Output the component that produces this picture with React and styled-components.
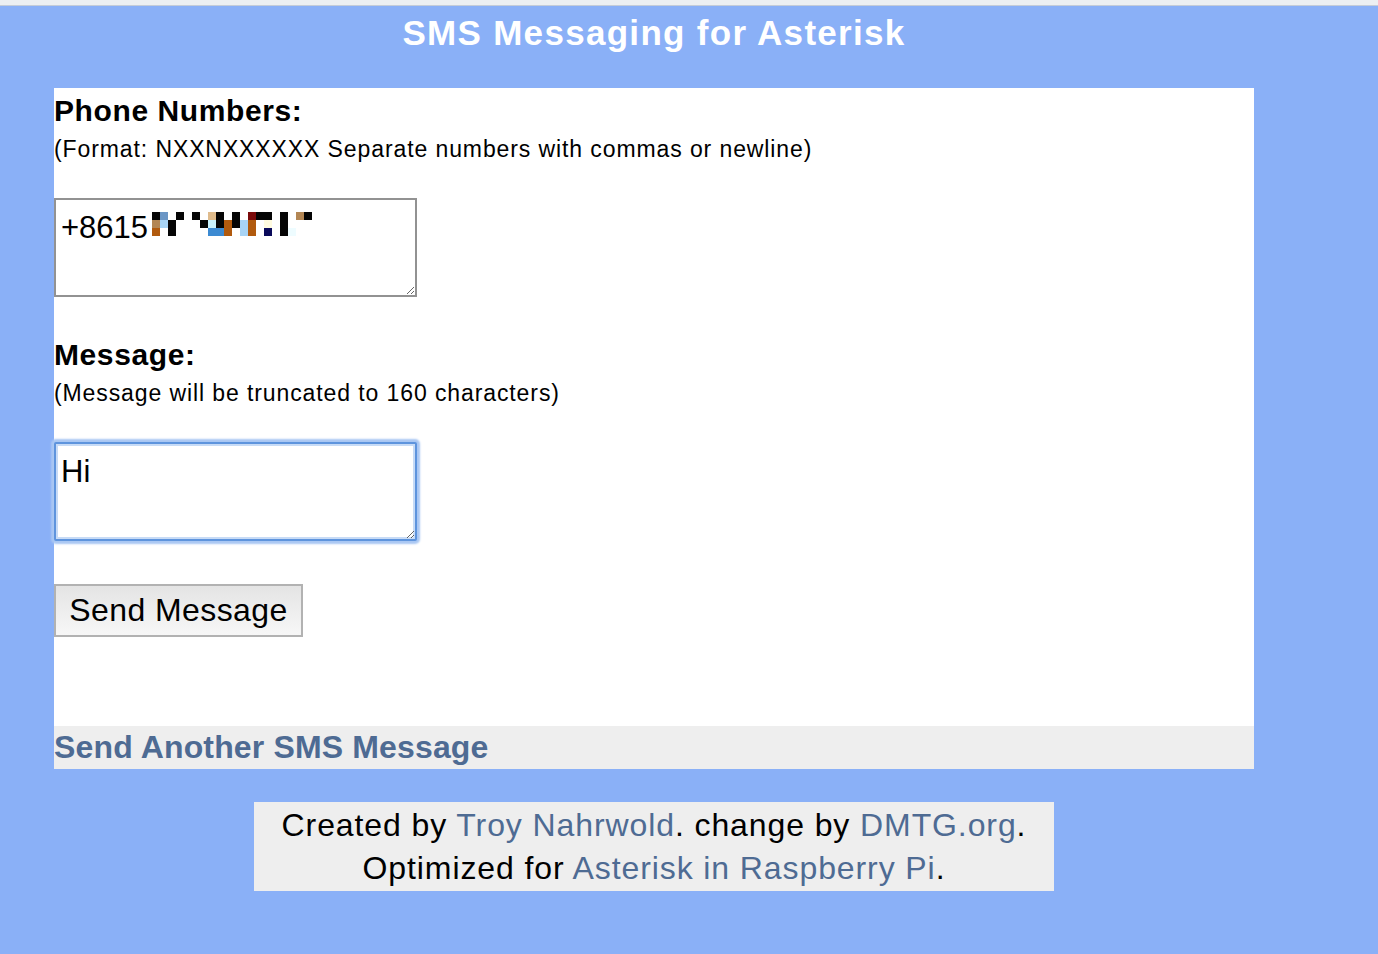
import React from "react";
import styled, { createGlobalStyle } from "styled-components";

const GlobalStyle = createGlobalStyle`
  html,
  body {
    margin: 0;
    padding: 0;
    background: #8ab0f7;
    min-height: 100%;
  }

  body {
    font-family: "Liberation Sans", Arial, Helvetica, sans-serif;
    color: #000;
  }
`;

const TopStrip = styled.div`
  height: 5px;
  background: #eceff2;
  border-bottom: 1px solid #c4ccd8;
`;

const Page = styled.div`
  width: 1200px;
  margin-left: 54px;
`;

const Title = styled.h1`
  margin: 0;
  height: 82px;
  box-sizing: border-box;
  padding-top: 7px;
  text-align: center;
  color: #fff;
  font-size: 35px;
  line-height: 40px;
  font-weight: bold;
  letter-spacing: 1.3px;
`;

const Panel = styled.form`
  background: #fff;
  padding: 6px 0 89px;
  display: flex;
  flex-direction: column;
  align-items: flex-start;
`;

const FieldLabel = styled.h2`
  margin: ${(p) => (p.$first ? "0" : "41px 0 0")};
  font-size: 30px;
  line-height: 34px;
  font-weight: bold;
  letter-spacing: 0.6px;
`;

const Hint = styled.p`
  margin: 8px 0 0;
  font-size: 23px;
  line-height: 26px;
  letter-spacing: 0.9px;
`;

const FieldWrap = styled.div`
  position: relative;
  margin-top: 36px;
  width: 363px;
  height: 99px;
`;

const TextBox = styled.textarea`
  display: block;
  box-sizing: border-box;
  width: 363px;
  height: 99px;
  margin: 0;
  padding: 10px 5px 7px;
  font-family: "Liberation Sans", Arial, sans-serif;
  font-size: 31px;
  line-height: 36px;
  color: #000;
  background: #fff;
  border: 2px solid ${(p) => (p.$focused ? "#5e94dd" : "#929292")};
  border-radius: ${(p) => (p.$focused ? "2px" : "0")};
  box-shadow: ${(p) =>
    p.$focused ? "0 0 2px 3px #a9c7f3, inset 0 0 0 2px #c7dbf6" : "none"};
  outline: none;
`;

const Mosaic = styled.svg`
  position: absolute;
  left: 98px;
  top: 14px;
  pointer-events: none;
`;

const SendButton = styled.button`
  margin-top: 43px;
  width: 249px;
  height: 53px;
  box-sizing: border-box;
  border: 2px solid #b2b2b2;
  border-radius: 0;
  background: linear-gradient(#e4e4e4, #f7f7f7);
  font-family: "Liberation Sans", Arial, sans-serif;
  font-size: 32px;
  letter-spacing: 0.4px;
  color: #000;
  padding: 0;
`;

const AnotherLink = styled.a`
  display: block;
  background: #eeeeee;
  color: #4e6b93;
  font-size: 32px;
  line-height: 43px;
  font-weight: bold;
  letter-spacing: 0.15px;
  text-decoration: none;
`;

const Footer = styled.footer`
  width: 800px;
  margin: 33px auto 0;
  padding: 2px 0 1px;
  background: #eeeeee;
  text-align: center;
  font-size: 32px;
  line-height: 43px;
  letter-spacing: 0.9px;
`;

const FooterLink = styled.a`
  color: #4e6b93;
  text-decoration: none;
`;

// pixelated phone number, 8px cells
const palette = {
  K: "#050505",
  B: "#6b96c5",
  T: "#dfbb8c",
  R: "#7a0a0a",
  N: "#b38654",
  L: "#a8d4f5",
  C: "#c9f1fb",
  O: "#b15a0e",
  Y: "#fffbe0",
  U: "#3c8ad2",
  V: "#0a0a5a",
  F: "#eefcff",
};

const mosaicRows = [
  "KBWKWKWTKWKWRKKWKWNK",
  "NLKWWWKCKOKLOWYWKWWW",
  "OWKWWWWUUOWLOWVWKFWW",
];

function PixelMask() {
  const cells = [];
  mosaicRows.forEach((row, y) => {
    row.split("").forEach((ch, x) => {
      if (palette[ch]) {
        cells.push(
          <rect key={`${x}-${y}`} x={x * 8} y={y * 8} width="8" height="8" fill={palette[ch]} />
        );
      }
    });
  });
  return (
    <Mosaic width="160" height="24" viewBox="0 0 160 24">
      {cells}
    </Mosaic>
  );
}

export default function App() {
  return (
    <>
      <GlobalStyle />
      <TopStrip />
      <Page>
        <Title>SMS Messaging for Asterisk</Title>
        <Panel onSubmit={(e) => e.preventDefault()}>
          <FieldLabel $first>Phone Numbers:</FieldLabel>
          <Hint>(Format: NXXNXXXXXX Separate numbers with commas or newline)</Hint>
          <FieldWrap>
            <TextBox name="numbers" defaultValue="+8615" />
            <PixelMask />
          </FieldWrap>

          <FieldLabel>Message:</FieldLabel>
          <Hint>(Message will be truncated to 160 characters)</Hint>
          <FieldWrap>
            <TextBox name="message" defaultValue="Hi" $focused />
          </FieldWrap>

          <SendButton type="submit">Send Message</SendButton>
        </Panel>
        <AnotherLink href="#">Send Another SMS Message</AnotherLink>
        <Footer>
          Created by <FooterLink href="#">Troy Nahrwold</FooterLink>. change by{" "}
          <FooterLink href="#">DMTG.org</FooterLink>.
          <br />
          Optimized for <FooterLink href="#">Asterisk in Raspberry Pi</FooterLink>.
        </Footer>
      </Page>
    </>
  );
}
